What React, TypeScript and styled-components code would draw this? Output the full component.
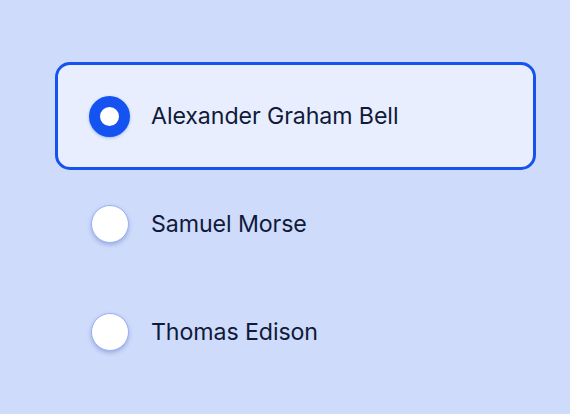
import React, { useState } from "react";
import styled, { createGlobalStyle } from "styled-components";

const Global = createGlobalStyle`
  html, body { margin: 0; padding: 0; }
  body {
    background: #cfdbfb;
    font-family: "Inter", "Liberation Sans", sans-serif;
    width: 570px;
    height: 414px;
    overflow: hidden;
  }
`;

const Page = styled.div`
  padding: 62px 0 0 55px;
`;

const Group = styled.div`
  width: 481px;
  display: flex;
  flex-direction: column;
`;

const Option = styled.label<{ $selected: boolean }>`
  box-sizing: border-box;
  height: 108px;
  display: flex;
  align-items: center;
  gap: 21px;
  padding-left: 31px;
  border-radius: 15px;
  border: 3px solid ${(p) => (p.$selected ? "#1553f1" : "transparent")};
  background: ${(p) => (p.$selected ? "#e8eefd" : "transparent")};
  cursor: pointer;
`;

const Radio = styled.span<{ $selected: boolean }>`
  box-sizing: border-box;
  width: 41px;
  height: 41px;
  border-radius: 50%;
  flex: none;
  background: #ffffff;
  ${(p) =>
    p.$selected
      ? `border: 11.5px solid #1553f1; box-shadow: 0 1px 3px rgba(21, 83, 241, 0.35);`
      : `width: 38px; height: 38px; margin: 0 1.5px; border: 1.5px solid #98b1f4; box-shadow: 0 2px 4px rgba(60, 90, 170, 0.35);`}
`;

const Label = styled.span`
  font-size: 23.2px;
  color: #101a3b;
  letter-spacing: -0.1px;
`;

const options = ["Alexander Graham Bell", "Samuel Morse", "Thomas Edison"];

export default function App() {
  const [sel, setSel] = useState(0);
  return (
    <Page>
      <Global />
      <Group>
        {options.map((o, i) => (
          <Option key={o} $selected={sel === i} onClick={() => setSel(i)}>
            <Radio $selected={sel === i} />
            <Label>{o}</Label>
          </Option>
        ))}
      </Group>
    </Page>
  );
}
